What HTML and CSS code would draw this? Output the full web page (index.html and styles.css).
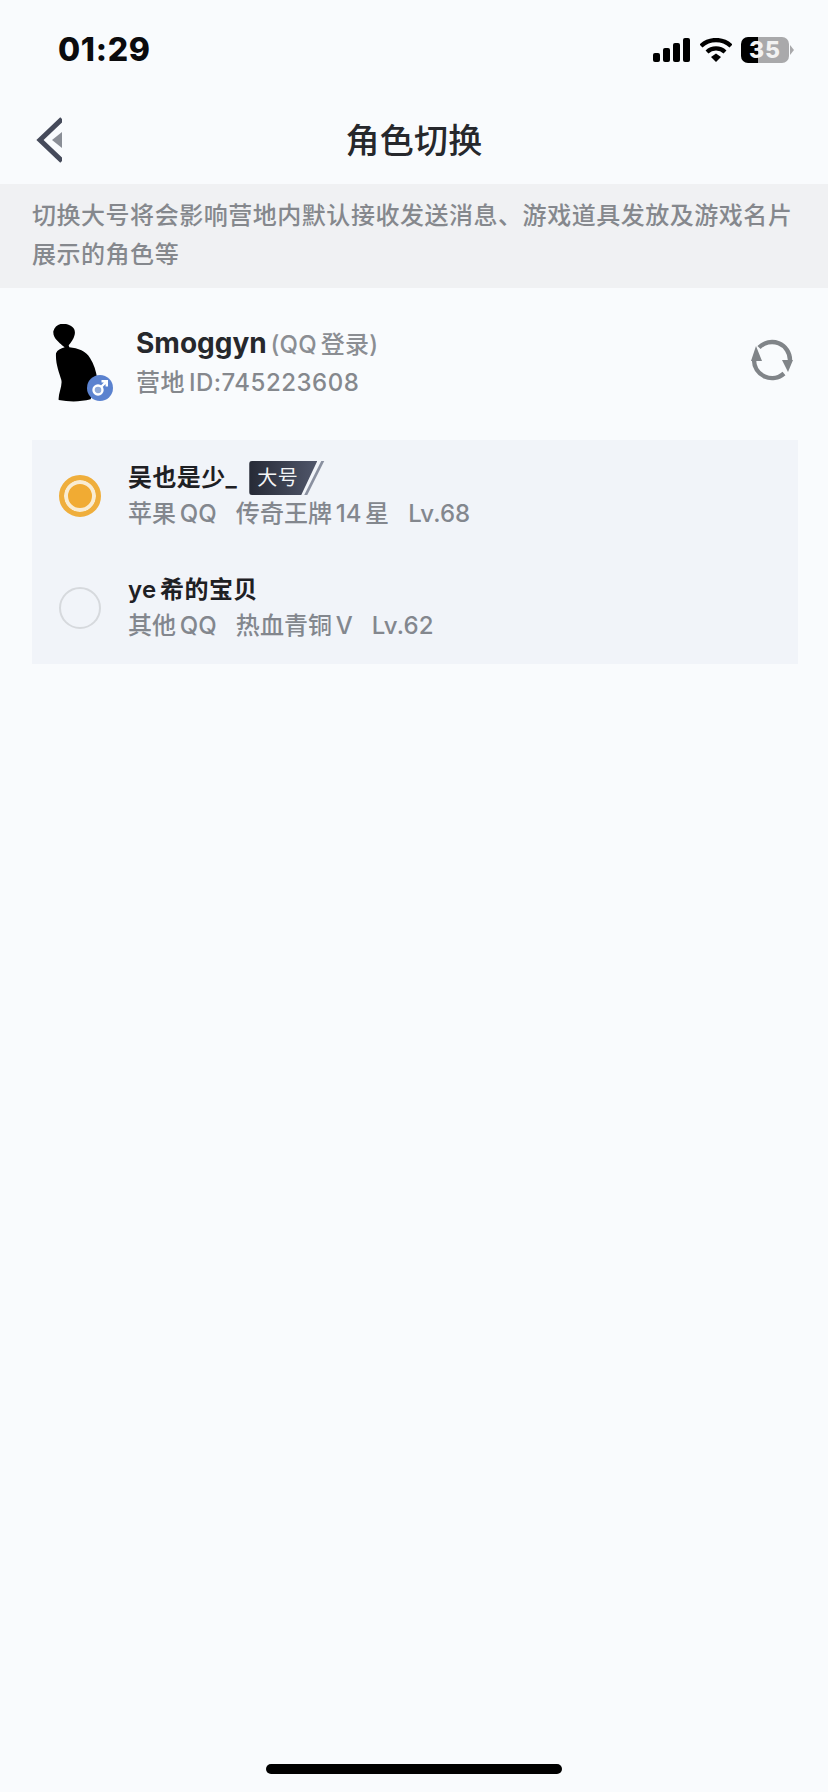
FILE: index.html
```html
<!DOCTYPE html>
<html>
	<head>
		<meta charset="UTF-8">
		<title>角色切换</title>
		<link rel="stylesheet" href="styles.css">
	</head>

	<body>
		<div class="page">
			<!--状态栏-->
			<div class="status">
				<span class="time">01:29</span>
				<div class="status-icons">
					<svg class="signal" width="37" height="24" viewBox="0 0 37 24">
						<rect x="0" y="15" width="7" height="9" rx="2"/>
						<rect x="10" y="10" width="7" height="14" rx="2"/>
						<rect x="20" y="5" width="7" height="19" rx="2"/>
						<rect x="30" y="0" width="7" height="24" rx="2"/>
					</svg>
					<svg class="wifi" width="32" height="24" viewBox="0 0 32 24">
						<path d="M1 8 A22 22 0 0 1 31 8" fill="none" stroke="#000" stroke-width="4.4"/>
						<path d="M7 14 A13 13 0 0 1 25 14" fill="none" stroke="#000" stroke-width="4.2"/>
						<path d="M11 19 L16 15.500 L21 19 L16 24 Z"/>
					</svg>
					<div class="battery"><span>35</span></div>
					<i class="battery-cap"></i>
				</div>
			</div>

			<!--标题栏-->
			<div class="nav">
				<svg class="back" width="27" height="48" viewBox="0 0 27 48">
					<path d="M27 3 L5 24 L27 45" fill="none" stroke="#454a5a" stroke-width="5"/>
					<path d="M27 16 L17 24 L27 32 Z" fill="#8a8e96"/>
				</svg>
				<h3 class="title">角色切换</h3>
			</div>

			<!--提示-->
			<p class="notice">切换大号将会影响营地内默认接收发送消息、游戏道具发放及游戏名片展示的角色等</p>

			<!--用户-->
			<div class="user">
				<div class="avatar">
					<svg width="64" height="80" viewBox="24 40 192 240">
						<path d="M70 62 C74 44 92 36 108 40 C126 44 138 54 134 72 C131 86 122 96 116 104 L118 110 C144 112 168 122 180 142 C192 160 198 182 202 205 L182 266 C150 274 118 274 86 268 C84 250 98 226 94 208 C88 186 76 160 78 128 C82 118 92 114 104 110 L96 104 C90 96 68 84 70 62 Z"/>
					</svg>
					<span class="gender">
						<svg width="18" height="18" viewBox="0 0 18 18">
							<circle cx="7" cy="11" r="4.500" fill="#8fa9d8" stroke="#fff" stroke-width="2.400"/>
							<path d="M10.500 7.500 L15.500 2.500 M10.500 2.200 H15.800 V7.500" fill="none" stroke="#fff" stroke-width="2.400"/>
						</svg>
					</span>
				</div>
				<div class="user-info">
					<div class="user-name">Smoggyn <span>(QQ 登录)</span></div>
					<div class="user-id">营地 ID:745223608</div>
				</div>
				<svg class="refresh" width="48" height="48" viewBox="0 0 48 48">
					<path d="M11 11.500 A18 18 0 0 1 42 24" fill="none" stroke="#808488" stroke-width="4.400"/>
					<path d="M36 37.500 A18 18 0 0 1 6 24" fill="none" stroke="#808488" stroke-width="4.400"/>
					<path d="M8 10 L3 25 L14 25 Z" fill="#808488"/>
					<path d="M34 24 L45 24 L40 36 Z" fill="#808488"/>
				</svg>
			</div>

			<!--角色列表-->
			<div class="roles">
				<div class="role">
					<i class="radio on"></i>
					<div class="role-info">
						<div class="role-name">吴也是少_
							<span class="tag"><i></i><b>大号</b></span>
						</div>
						<div class="role-meta">
							<span>苹果 QQ</span>
							<span>传奇王牌 14 星</span>
							<span>Lv.68</span>
						</div>
					</div>
				</div>
				<div class="role">
					<i class="radio"></i>
					<div class="role-info">
						<div class="role-name">ye 希的宝贝</div>
						<div class="role-meta">
							<span>其他 QQ</span>
							<span>热血青铜 V</span>
							<span>Lv.62</span>
						</div>
					</div>
				</div>
			</div>

			<!--底部横条-->
			<div class="home-bar"></div>
		</div>
	</body>
</html>
```

FILE: styles.css
```css
*{
	margin: 0;
	padding: 0;
	box-sizing: border-box;
}
body{
	background: #f9fbfd;
	font-family: Inter, "Noto Sans CJK SC", sans-serif;
}
.page{
	height: 1792px;
	display: flex;
	flex-direction: column;
	overflow: hidden;
}

/* 状态栏 */
.status{
	height: 98px;
	padding: 33px 34px 0 58px;
	display: flex;
	justify-content: space-between;
	align-items: flex-start;
}
.time{
	font-size: 32px;
	line-height: 34px;
	font-weight: 800;
	letter-spacing: 0.7px;
	color: #0b0b0d;
}
.status-icons{
	display: flex;
	align-items: center;
	height: 30px;
	margin-top: 2px;
}
.wifi{
	margin-left: 10px;
}
.battery{
	width: 48px;
	height: 26px;
	margin-left: 9px;
	border-radius: 7px;
	background: linear-gradient(to right, #000 36%, #a9a9ab 36%);
	color: #f2f2f2;
	font-size: 23px;
	font-weight: 800;
	line-height: 26px;
	text-align: center;
	letter-spacing: 1px;
}
.battery-cap{
	width: 4px;
	height: 10px;
	margin-left: 1px;
	background: #a9a9ab;
	clip-path: polygon(0 0, 100% 50%, 0 100%);
}

/* 标题栏 */
.nav{
	height: 86px;
	display: flex;
	align-items: center;
	justify-content: center;
	position: relative;
}
.back{
	position: absolute;
	left: 35px;
	top: 18px;
}
.title{
	font-size: 34px;
	line-height: 48px;
	font-weight: 500;
	letter-spacing: 0.3px;
	color: #26282c;
}

/* 提示 */
.notice{
	height: 104px;
	padding: 12px 32px 0;
	background: #f0f1f3;
	color: #85888d;
	font-size: 24px;
	line-height: 39px;
	font-weight: 500;
	letter-spacing: 0.53px;
}

/* 用户 */
.user{
	height: 152px;
	padding: 0 32px 0 14px;
	display: flex;
	align-items: center;
}
.avatar{
	width: 91px;
	height: 80px;
	position: relative;
}
.avatar svg{
	display: block;
	margin-left: 24px;
}
.gender{
	position: absolute;
	left: 73px;
	top: 51px;
	width: 26px;
	height: 26px;
	border-radius: 50%;
	background: #5b82cf;
	display: flex;
	align-items: center;
	justify-content: center;
}
.avatar .gender svg{
	margin: 0;
}
.user-info{
	flex: 1;
	margin-left: 31px;
	margin-bottom: 4px;
	word-spacing: -3px;
}
.user-name{
	font-size: 28px;
	line-height: 40px;
	font-weight: 700;
	color: #26282c;
}
.user-name span{
	font-size: 24px;
	font-weight: 500;
	letter-spacing: 0.3px;
	color: #8b8e93;
}
.user-id{
	font-size: 24px;
	line-height: 36px;
	font-weight: 500;
	color: #85888d;
	letter-spacing: 0.5px;
}
.refresh{
	margin-bottom: 8px;
}

/* 角色列表 */
.roles{
	width: 766px;
	height: 224px;
	margin-left: 32px;
	background: #f1f4f9;
}
.role{
	height: 112px;
	padding: 18px 0 0 27px;
	display: flex;
}
.radio{
	display: block;
	flex: none;
	width: 42px;
	height: 42px;
	margin-top: 17px;
	border-radius: 50%;
	border: 2px solid #d6d9dd;
}
.radio.on{
	border: 5px solid #efae3c;
	background: #f1ab33;
	box-shadow: inset 0 0 0 4px #f9ecd2;
}
.role-info{
	margin-left: 27px;
	word-spacing: -3px;
}
.role-name{
	height: 40px;
	font-size: 24px;
	line-height: 40px;
	font-weight: 600;
	color: #1e2024;
	display: flex;
	align-items: center;
	gap: 12px;
	letter-spacing: 0.4px;
}
.tag{
	position: relative;
	flex: none;
	width: 76px;
	height: 34px;
	padding-left: 8px;
	color: #f3f4f6;
	font-size: 20px;
	line-height: 34px;
}
.tag b{
	position: relative;
	font-weight: 400;
}
.tag::before{
	content: "";
	position: absolute;
	left: 0;
	top: 0;
	width: 68px;
	height: 34px;
	border-radius: 3px 0 0 3px;
	background: linear-gradient(to right, #262a36, #50566a);
	clip-path: polygon(0 0, 100% 0, 52px 100%, 0 100%);
}
.tag i{
	position: absolute;
	left: 0;
	top: 0;
	width: 76px;
	height: 34px;
	background: #8a90a0;
	clip-path: polygon(72px 0, 75px 0, 58px 100%, 55px 100%);
}
.role-meta{
	display: flex;
	gap: 19px;
	font-size: 24px;
	line-height: 32px;
	font-weight: 500;
	letter-spacing: 0.1px;
	color: #83878e;
}

/* 底部横条 */
.home-bar{
	width: 296px;
	height: 10px;
	margin: auto auto 18px;
	border-radius: 5px;
	background: #000;
}
```
